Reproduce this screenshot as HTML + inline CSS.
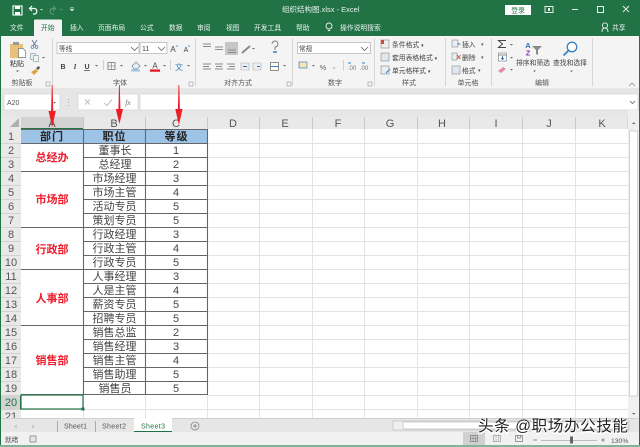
<!DOCTYPE html>
<html><head><meta charset="utf-8"><style>
html,body{margin:0;padding:0;width:640px;height:447px;overflow:hidden;background:#fff}
svg{display:block;filter:blur(.35px)}
text{font-family:"Liberation Sans","Noto Sans CJK SC",sans-serif}
.w{font-size:6.800px;fill:#e8f2ec}
.c{font-size:11px;fill:#444;text-anchor:middle}
.h{font-size:11px;fill:#222;text-anchor:middle;font-weight:bold}
.r{font-size:11px;fill:#f01c2c;text-anchor:middle;font-weight:bold}
.n{font-size:11px;fill:#555;text-anchor:middle}
.l{font-size:7px;fill:#555;text-anchor:middle}
</style></head><body>
<svg width="640" height="447" viewBox="0 0 640 447" xmlns="http://www.w3.org/2000/svg">
<rect width="640" height="447" fill="#fff"/>
<!-- title bar + tabs -->
<rect width="640" height="36" fill="#217346"/>
<rect x="13" y="6" width="9" height="9" fill="none" stroke="#fff" stroke-width="1.100"/><rect x="15" y="6" width="5" height="3" fill="#fff"/><rect x="15" y="12" width="5" height="3" fill="#fff"/>
<path d="M30 8.500h5a3 3 0 0 1 0 5.500h-2M32 6l-2.500 2.500 2.500 2.500" fill="none" stroke="#fff" stroke-width="1.200"/>
<path d="M40 9l1.500 1.500 1.500-1.500z" fill="#ddd"/>
<path d="M55 8.500h-3a3 3 0 0 0 0 5.500h2M53 6l2.500 2.500-2.500 2.500" fill="none" stroke="#5f9a7a" stroke-width="1.100"/>
<path d="M60 9l1.500 1.500 1.500-1.500z" fill="#5f9a7a"/>
<path d="M70 7.500h4M70 9l2 2 2-2z" fill="#cfe0d6" stroke="#cfe0d6" stroke-width=".6"/>
<text x="282" y="12" style="font-size:7.500px;fill:#e8f2ec">组织结构图.xlsx  -  Excel</text>
<rect x="505" y="5" width="26" height="10" fill="#fff"/>
<text x="518" y="12.500" style="font-size:6.800px;fill:#217346;text-anchor:middle">登录</text>
<rect x="545" y="6.500" width="8" height="6" fill="none" stroke="#e8f2ec"/><rect x="548" y="8" width="2" height="3" fill="#e8f2ec"/>
<path d="M572 9.500h6" stroke="#dfeee6"/>
<rect x="597.500" y="6.500" width="6" height="6" fill="none" stroke="#e8f2ec"/>
<path d="M623 6l6 6M629 6l-6 6" stroke="#e8f2ec" stroke-width=".9"/>
<path d="M34 36V20.500q0-1 1-1h26q1 0 1 1V36z" fill="#f3f3f3"/>
<text x="10" y="30" class="w">文件</text>
<text x="41" y="30" style="font-size:6.800px;fill:#217346">开始</text>
<text x="70" y="30" class="w">插入</text>
<text x="98" y="30" class="w">页面布局</text>
<text x="140" y="30" class="w">公式</text>
<text x="169" y="30" class="w">数据</text>
<text x="197" y="30" class="w">审阅</text>
<text x="226" y="30" class="w">视图</text>
<text x="254" y="30" class="w">开发工具</text>
<text x="296" y="30" class="w">帮助</text>
<circle cx="329" cy="26" r="3" fill="none" stroke="#e8f2ec" stroke-width=".9"/><path d="M327.800 30.500h2.400" stroke="#e8f2ec"/>
<text x="340" y="30" class="w">操作说明搜索</text>
<circle cx="605" cy="25.500" r="2.600" fill="none" stroke="#e8f2ec" stroke-width=".9"/><path d="M602 32q0-4 3-4t3 4" fill="none" stroke="#e8f2ec" stroke-width=".9"/>
<text x="612" y="30" class="w">共享</text>
<!-- ribbon -->
<rect y="36" width="640" height="52" fill="#f4f4f4"/>
<rect y="88" width="640" height="30" fill="#e6e6e6"/>
<path d="M52.500 38v48M195.500 38v48M292.500 38v48M374.500 38v48M445.500 38v48M491.500 38v48M592.500 38v48" stroke="#d6d6d6"/>
<!-- clipboard -->
<rect x="10" y="44" width="13" height="14" fill="#e8c07a"/><rect x="13" y="42" width="6" height="3" fill="#999"/>
<path d="M18.500 48.500h4.500l2.500 2.500v6.500h-7z" fill="#fff" stroke="#777" stroke-width=".7"/>
<text x="17" y="66" style="font-size:7px;fill:#333;text-anchor:middle">粘贴</text><path d="M16 70.500l1.500 1.500 1.500-1.500z" fill="#555"/>
<path d="M32 40l4 6M37 40l-4 6" stroke="#5a7a9a" stroke-width=".9"/><circle cx="32.500" cy="47" r="1.400" fill="none" stroke="#5a7a9a" stroke-width=".7"/><circle cx="36.500" cy="47" r="1.400" fill="none" stroke="#5a7a9a" stroke-width=".7"/>
<rect x="30.500" y="53.500" width="5" height="6" fill="#e8eef4" stroke="#8aa" stroke-width=".7"/><rect x="33.500" y="55.500" width="5" height="6" fill="#f4f4f4" stroke="#8aa" stroke-width=".7"/><path d="M42 57l1.500 1.500 1.500-1.500z" fill="#666"/>
<path d="M31 72l5-3 2 2-4 4z" fill="#d9a53a"/><path d="M36 68l3-2 1 2-2 2z" fill="#555"/>
<text x="22" y="85" class="l">剪贴板</text>
<rect x="46" y="82" width="4" height="4" fill="none" stroke="#999" stroke-width=".6"/>
<!-- font -->
<rect x="57" y="42.500" width="82" height="11" fill="#fff" stroke="#c6c6c6"/>
<rect x="140" y="42.500" width="27" height="11" fill="#fff" stroke="#c6c6c6"/>
<text x="59" y="51" style="font-size:6.600px;fill:#444">等线</text>
<text x="142" y="51" style="font-size:7px;fill:#444">11</text>
<path d="M131 47l3.500 3.500 3.500-3.500M158 47l3.500 3.500 3.500-3.500" fill="none" stroke="#666" stroke-width=".8"/>
<text x="173" y="52" style="font-size:8px;fill:#444;text-anchor:middle">A</text><text x="186" y="52" style="font-size:7px;fill:#444;text-anchor:middle">A</text>
<path d="M176 45.500l1 1 1-1M188 46.500l1-1 1 1" stroke="#3a80c0" fill="none" stroke-width=".6"/>
<text x="63" y="69" style="font-size:7px;fill:#444;text-anchor:middle;font-weight:bold">B</text>
<text x="75" y="69" style="font-size:7px;fill:#444;text-anchor:middle;font-style:italic;font-family:'Liberation Serif',serif;font-weight:bold">I</text>
<text x="87" y="69" style="font-size:7px;fill:#444;text-anchor:middle;font-weight:bold">U</text><path d="M84 70.500h6" stroke="#444" stroke-width=".7"/>
<path d="M95 65l1.500 1.500 1.500-1.500zM120 65l1.500 1.500 1.500-1.500zM144 65l1.500 1.500 1.500-1.500zM163 65l1.500 1.500 1.500-1.500zM187 65l1.500 1.500 1.500-1.500z" fill="#666"/>
<path d="M103.500 60v10M170.500 60v10" stroke="#d0d0d0"/>
<rect x="108" y="62.500" width="7" height="7" fill="none" stroke="#777" stroke-width=".8"/><path d="M111.500 62.500v7M108 66h7" stroke="#777" stroke-width=".6"/>
<path d="M132 66l4-4 4 4-3 3h-3z" fill="#e8eef4" stroke="#6a8aa0" stroke-width=".7"/><rect x="131" y="69.500" width="9" height="2" fill="#9dc3e6"/>
<text x="155" y="68.500" style="font-size:8px;fill:#444;text-anchor:middle">A</text><rect x="150" y="69.500" width="10" height="2.200" fill="#e01020"/>
<text x="179" y="70" style="font-size:8px;fill:#3a80c0;text-anchor:middle">文</text>
<text x="120" y="85" class="l">字体</text>
<rect x="189" y="82" width="4" height="4" fill="none" stroke="#999" stroke-width=".6"/>
<!-- alignment -->
<rect x="225" y="42" width="13" height="13" fill="#c6c6c6"/>
<path d="M203 44h8M203 46.500h8M215 47h8M215 49.500h8M228 50h8M228 52.500h8M203 64h8M203 66.500h6M203 69h8M215 64h8M216 66.500h6M215 69h8M227 64h8M229 66.500h6M227 69h8" stroke="#8a8a8a" stroke-width=".9"/>
<path d="M242 53l8-7" stroke="#8a8a8a" stroke-width="2"/><path d="M252 48l1.500 1.500 1.500-1.500z" fill="#666"/>
<path d="M241 63h8v7h-8zM253 63h8v7h-8z" fill="#eceff2" stroke="#aaa" stroke-width=".6"/>
<path d="M247 66.500h-4M257 66.500h3" stroke="#2a70b8" stroke-width="1.100"/>
<path d="M272 44a3 3 0 1 1 3 3v3" fill="none" stroke="#777" stroke-width=".9"/><path d="M273 52h4" stroke="#3a80c0" stroke-width="1.500"/>
<rect x="270.500" y="62.500" width="8" height="8" fill="#fff" stroke="#777" stroke-width=".8"/><path d="M270.500 66.500h8" stroke="#3a80c0"/>
<path d="M283 65l1.500 1.500 1.500-1.500z" fill="#666"/>
<text x="238" y="85" class="l">对齐方式</text>
<rect x="287" y="82" width="4" height="4" fill="none" stroke="#999" stroke-width=".6"/>
<!-- number -->
<rect x="297.500" y="42.500" width="73" height="11" fill="#fff" stroke="#c6c6c6"/>
<text x="299" y="51" style="font-size:6.600px;fill:#444">常规</text>
<path d="M361 47l3.500 3.500 3.500-3.500" fill="none" stroke="#666" stroke-width=".8"/>
<rect x="299" y="62" width="8" height="6" fill="#f6e7b0" stroke="#3a80c0" stroke-width=".7"/><path d="M312 65l1.500 1.500 1.500-1.500z" fill="#666"/>
<text x="323" y="70" style="font-size:7.500px;fill:#666;text-anchor:middle">%</text><text x="334" y="68" style="font-size:8px;fill:#555;text-anchor:middle">,</text>
<path d="M343.500 60v11" stroke="#d0d0d0"/>
<text x="352" y="70" style="font-size:6px;fill:#777;text-anchor:middle">.00</text><text x="364" y="70" style="font-size:6px;fill:#777;text-anchor:middle">.00</text>
<path d="M348 63h3M362 63h3" stroke="#3a80c0"/>
<text x="335" y="85" class="l">数字</text>
<rect x="368" y="82" width="4" height="4" fill="none" stroke="#999" stroke-width=".6"/>
<!-- styles -->
<rect x="381" y="40" width="8" height="8" fill="#eee" stroke="#888" stroke-width=".6"/><rect x="381" y="40" width="3" height="4" fill="#d04a30"/>
<rect x="381" y="53" width="8" height="8" fill="#dfe6ee" stroke="#888" stroke-width=".6"/>
<rect x="381" y="66" width="8" height="8" fill="#e8eef4" stroke="#888" stroke-width=".6"/><path d="M386 73l4-4" stroke="#3a80c0"/>
<text x="392" y="47" style="font-size:6.800px;fill:#444">条件格式 <tspan font-size="5">▾</tspan></text>
<text x="392" y="60" style="font-size:6.800px;fill:#444">套用表格格式 <tspan font-size="5">▾</tspan></text>
<text x="392" y="73" style="font-size:6.800px;fill:#444">单元格样式 <tspan font-size="5">▾</tspan></text>
<text x="409" y="85" class="l">样式</text>
<!-- cells -->
<rect x="452" y="40" width="6" height="7" fill="#e8eef4" stroke="#888" stroke-width=".6"/><path d="M457 44h3.500" stroke="#3a80c0"/>
<rect x="452" y="53" width="5" height="7" fill="#e8eef4" stroke="#888" stroke-width=".6"/><path d="M457 55l3.500 4M460.500 55l-3.500 4" stroke="#d04a30" stroke-width=".9"/>
<rect x="452" y="66" width="8" height="8" fill="#dfe8f2" stroke="#888" stroke-width=".6"/>
<text x="462" y="47" style="font-size:6.800px;fill:#444">插入</text><text x="481" y="46" style="font-size:5px;fill:#555">▾</text>
<text x="462" y="60" style="font-size:6.800px;fill:#444">删除</text><text x="481" y="59" style="font-size:5px;fill:#555">▾</text>
<text x="462" y="73" style="font-size:6.800px;fill:#444">格式</text><text x="478" y="72" style="font-size:5px;fill:#555">▾</text>
<text x="468" y="85" class="l">单元格</text>
<!-- editing -->
<path d="M506 40.500h-7.500l4 3.500-4 3.500h7.500" fill="none" stroke="#444" stroke-width="1"/>
<path d="M510 44l1.500 1.500 1.500-1.500zM510 57l1.500 1.500 1.500-1.500zM510 69l1.500 1.500 1.500-1.500z" fill="#666"/>
<rect x="498.500" y="53" width="8" height="8" fill="#fff" stroke="#888" stroke-width=".7"/><path d="M498.500 55h8" stroke="#888"/><path d="M502.500 56v3M501 58l1.500 1.500 1.500-1.500" stroke="#2a70b8" fill="none" stroke-width=".9"/>
<path d="M498 71l5-4 3 2-5 4z" fill="#e88aa0"/>
<text x="528" y="48" style="font-size:7.500px;fill:#2a70b8;text-anchor:middle;font-weight:bold">A</text>
<text x="528" y="55.500" style="font-size:7.500px;fill:#8a3ab0;text-anchor:middle;font-weight:bold">Z</text>
<path d="M532 46h10l-4 4v5l-2-1v-4z" fill="#8a8a8a"/>
<circle cx="572" cy="47" r="4.800" fill="#fff" stroke="#3a80c0" stroke-width="1.300"/><path d="M568.500 50.500l-5 5" stroke="#3a80c0" stroke-width="1.800"/>
<text x="533" y="65" style="font-size:6.800px;fill:#444;text-anchor:middle">排序和筛选</text>
<text x="570" y="65" style="font-size:6.800px;fill:#444;text-anchor:middle">查找和选择</text>
<path d="M533 70.500l1.500 1.500 1.500-1.500zM570 70.500l1.500 1.500 1.500-1.500z" fill="#666"/>
<text x="542" y="85" class="l">编辑</text>
<path d="M629 86l3-3 3 3" fill="none" stroke="#888" stroke-width=".7"/>
<!-- formula bar -->
<rect x="4" y="94" width="56" height="16" fill="#fff" stroke="#dcdcdc"/>
<text x="7" y="105" style="font-size:7px;fill:#555">A20</text>
<path d="M53 102l1.500 1.500 1.500-1.500z" fill="#666"/>
<path d="M68.500 99v1M68.500 102v1M68.500 105v1" stroke="#aaa"/>
<rect x="78" y="94" width="60" height="16" fill="#fff" stroke="#dcdcdc"/>
<path d="M85 99.500l5 5M90 99.500l-5 5" stroke="#c0c0c0"/>
<path d="M104 103l3 2.500 5-6" fill="none" stroke="#c0c0c0"/>
<text x="128" y="105" style="font-size:7.500px;fill:#666;text-anchor:middle;font-style:italic;font-family:'Liberation Serif',serif">fx</text>
<rect x="140" y="94" width="498" height="16" fill="#fff" stroke="#dcdcdc"/>
<path d="M630 101l2.500 2.500 2.500-2.500" fill="none" stroke="#666" stroke-width=".8"/>
<!-- col header -->
<rect x="1" y="117" width="627" height="12" fill="#e9e9e9"/>
<rect x="21" y="117" width="62" height="12" fill="#d2d2d2"/>
<rect x="21" y="128" width="62" height="1.200" fill="#217346"/>
<path d="M10 127h9v-9z" fill="#b0b0b0"/>
<path d="M83.500 117v12M145.500 117v12M207.500 117v12M259.500 117v12M312.500 117v12M364.500 117v12M417.500 117v12M469.500 117v12M522.500 117v12M575.500 117v12M628 117v12" stroke="#c8c8c8"/>
<text x="52" y="127" class="n">A</text><text x="114" y="127" class="n">B</text><text x="176" y="127" class="n">C</text><text x="233" y="127" class="n">D</text><text x="285" y="127" class="n">E</text><text x="338" y="127" class="n">F</text><text x="390" y="127" class="n">G</text><text x="442" y="127" class="n">H</text><text x="496" y="127" class="n">I</text><text x="549" y="127" class="n">J</text><text x="602" y="127" class="n">K</text>
<!-- row header -->
<rect x="1" y="129" width="20" height="290" fill="#e9e9e9"/>
<rect x="1" y="395" width="20" height="14" fill="#d2d2d2"/>
<rect x="20" y="395" width="1" height="14" fill="#217346"/>
<path d="M1 143.500h20M1 157.500h20M1 171.500h20M1 185.500h20M1 199.500h20M1 213.500h20M1 227.500h20M1 241.500h20M1 255.500h20M1 269.500h20M1 283.500h20M1 297.500h20M1 311.500h20M1 325.500h20M1 339.500h20M1 353.500h20M1 367.500h20M1 381.500h20M1 395.500h20M1 409.500h20" stroke="#d2d2d2"/>
<g>
<text x="11" y="140" class="n">1</text><text x="11" y="154" class="n">2</text><text x="11" y="168" class="n">3</text><text x="11" y="182" class="n">4</text><text x="11" y="196" class="n">5</text><text x="11" y="210" class="n">6</text><text x="11" y="224" class="n">7</text><text x="11" y="238" class="n">8</text><text x="11" y="252" class="n">9</text><text x="11" y="266" class="n">10</text><text x="11" y="280" class="n">11</text><text x="11" y="294" class="n">12</text><text x="11" y="308" class="n">13</text><text x="11" y="322" class="n">14</text><text x="11" y="336" class="n">15</text><text x="11" y="350" class="n">16</text><text x="11" y="364" class="n">17</text><text x="11" y="378" class="n">18</text><text x="11" y="392" class="n">19</text><text x="11" y="406" style="font-size:11px;fill:#217346;text-anchor:middle">20</text><text x="11" y="420" class="n">21</text>
</g>
<!-- gridlines -->
<path d="M208 143.500H628M208 157.500H628M208 171.500H628M208 185.500H628M208 199.500H628M208 213.500H628M208 227.500H628M208 241.500H628M208 255.500H628M208 269.500H628M208 283.500H628M208 297.500H628M208 311.500H628M208 325.500H628M208 339.500H628M208 353.500H628M208 367.500H628M208 381.500H628M208 395.500H628M208 409.500H628M21 409.500H208" stroke="#e4e4e4"/>
<path d="M259.500 129V419M312.500 129V419M364.500 129V419M417.500 129V419M469.500 129V419M522.500 129V419M575.500 129V419M83.500 395V419M145.500 395V419M207.500 395V419" stroke="#e4e4e4"/>
<!-- table -->
<rect x="21" y="129" width="186" height="14" fill="#9dc3e6"/>
<path d="M21 129.500H207.500M21 143.500H207.500M21 171.500H207.500M21 227.500H207.500M21 269.500H207.500M21 325.500H207.500M21 394.500H207.500" stroke="#666" stroke-width="1.100"/>
<path d="M84 157.500H207.500M84 185.500H207.500M84 199.500H207.500M84 213.500H207.500M84 241.500H207.500M84 255.500H207.500M84 283.500H207.500M84 297.500H207.500M84 311.500H207.500M84 339.500H207.500M84 353.500H207.500M84 367.500H207.500M84 381.500H207.500" stroke="#666" stroke-width="1.100"/>
<path d="M83.500 129V395M145.500 129V395M207.500 129V395" stroke="#666" stroke-width="1.100"/>
<text x="52" y="140" class="h" letter-spacing="1">部门</text><text x="114.500" y="140" class="h" letter-spacing="1">职位</text><text x="176.500" y="140" class="h" letter-spacing="1">等级</text>
<text x="52" y="161" class="r">总经办</text><text x="52" y="203" class="r">市场部</text><text x="52" y="253" class="r">行政部</text><text x="52" y="302" class="r">人事部</text><text x="52" y="364" class="r">销售部</text>
<g>
<text x="115" y="154" class="c">董事长</text><text x="176" y="154" class="c">1</text>
<text x="115" y="168" class="c">总经理</text><text x="176" y="168" class="c">2</text>
<text x="114.500" y="182" class="c">市场经理</text><text x="176" y="182" class="c">3</text>
<text x="114.500" y="196" class="c">市场主管</text><text x="176" y="196" class="c">4</text>
<text x="114.500" y="210" class="c">活动专员</text><text x="176" y="210" class="c">5</text>
<text x="114.500" y="224" class="c">策划专员</text><text x="176" y="224" class="c">5</text>
<text x="114.500" y="238" class="c">行政经理</text><text x="176" y="238" class="c">3</text>
<text x="114.500" y="252" class="c">行政主管</text><text x="176" y="252" class="c">4</text>
<text x="114.500" y="266" class="c">行政专员</text><text x="176" y="266" class="c">5</text>
<text x="114.500" y="280" class="c">人事经理</text><text x="176" y="280" class="c">3</text>
<text x="114.500" y="294" class="c">人是主管</text><text x="176" y="294" class="c">4</text>
<text x="114.500" y="308" class="c">薪资专员</text><text x="176" y="308" class="c">5</text>
<text x="114.500" y="322" class="c">招聘专员</text><text x="176" y="322" class="c">5</text>
<text x="114.500" y="336" class="c">销售总监</text><text x="176" y="336" class="c">2</text>
<text x="114.500" y="350" class="c">销售经理</text><text x="176" y="350" class="c">3</text>
<text x="114.500" y="364" class="c">销售主管</text><text x="176" y="364" class="c">4</text>
<text x="114.500" y="378" class="c">销售助理</text><text x="176" y="378" class="c">5</text>
<text x="115" y="392" class="c">销售员</text><text x="176" y="392" class="c">5</text>
</g>
<!-- selection -->
<rect x="21" y="395" width="62" height="14" fill="#fff" stroke="#217346" stroke-width="1.200"/>
<rect x="81.500" y="407.500" width="3" height="3" fill="#217346"/>
<!-- arrows -->
<path d="M51.800 85h.8L53.200 111 55.800 111 52.200 127 48.500 111 51.100 111z" fill="#ee1c25"/>
<path d="M119 85h.8L120.400 109 123 109 119.400 124 115.800 109 118.400 109z" fill="#ee1c25"/>
<path d="M178.500 85h.8L179.900 109 182.500 109 178.900 125 175.300 109 177.900 109z" fill="#ee1c25"/>
<!-- scrollbar -->
<rect x="628" y="110" width="12" height="309" fill="#f0f0f0"/>
<rect x="629.500" y="131" width="8" height="265" fill="#fff" stroke="#c8c8c8" stroke-width=".8"/>
<path d="M632 413l1.800 1.800 1.800-1.800z" fill="#666"/>
<path d="M632 124l1.800-1.800 1.800 1.800z" fill="#666"/>
<!-- tabs -->
<rect x="1" y="418" width="639" height="14" fill="#e6e6e6"/>
<path d="M0 418.500h640" stroke="#d0d0d0"/>
<path d="M17 425l-2 1.500 2 1.500M32 425l2 1.500-2 1.500" fill="none" stroke="#b8b8b8" stroke-width=".8"/>
<path d="M57.500 421v11M95.500 421v11" stroke="#aaa"/>
<rect x="134" y="418" width="38" height="14" fill="#fff"/>
<rect x="134" y="431" width="38" height="1.500" fill="#217346"/>
<text x="64" y="428.500" textLength="23" style="font-size:7px;fill:#555">Sheet1</text>
<text x="102" y="428.500" textLength="24" style="font-size:7px;fill:#555">Sheet2</text>
<text x="141" y="428.500" textLength="24" style="font-size:7px;fill:#217346">Sheet3</text>
<circle cx="195" cy="426" r="4" fill="none" stroke="#888" stroke-width=".8"/><path d="M193 426h4M195 424v4" stroke="#777" stroke-width=".8"/>
<rect x="393" y="421" width="236" height="9" fill="#f0f0f0" stroke="#c0c0c0" stroke-width=".7"/>
<rect x="403" y="422" width="225" height="7" fill="#fff" stroke="#bbb" stroke-width=".7"/>
<!-- status -->
<rect x="1" y="432" width="639" height="13" fill="#f1f1f1"/>
<text x="5" y="442" style="font-size:6.600px;fill:#555">就绪</text>
<rect x="30" y="436" width="6" height="6" fill="#e8e8e8" stroke="#777" stroke-width=".7"/>
<rect x="463" y="432" width="22" height="13" fill="#d0d0d0"/>
<rect x="470.500" y="435.500" width="7" height="6" fill="none" stroke="#777" stroke-width=".7"/><path d="M473 435.500v6M475.500 435.500v6M470.500 438.500h7" stroke="#777" stroke-width=".5"/>
<rect x="493.500" y="435.500" width="7" height="6" fill="none" stroke="#999" stroke-width=".7"/><path d="M496 435.500v6M498.500 435.500v6" stroke="#999" stroke-width=".5"/>
<path d="M515.500 435.500h7v6h-7zM517.500 435.500v2.500h3v-2.500" fill="none" stroke="#777" stroke-width=".7"/>
<path d="M533 440h4M601 440h4M603 438v4" stroke="#777" stroke-width=".7"/>
<path d="M541 440.500h56" stroke="#aaa" stroke-width=".8"/>
<rect x="570" y="436.500" width="3" height="7" fill="#666"/>
<text x="611" y="443" style="font-size:6.800px;fill:#555">130%</text>
<!-- frame -->
<rect x=".5" y=".5" width="639" height="446" fill="none" stroke="#217346" stroke-width="1"/>
<rect y="445" width="640" height="2" fill="#7fb39a"/>
<!-- watermark -->
<text x="478" y="432" textLength="150" style="font-size:15.500px;fill:#fff;stroke:#fff;stroke-width:1.600px;paint-order:stroke">头条 @职场办公技能</text>
<text x="478" y="431" textLength="150" style="font-size:15.500px;fill:#222">头条 @职场办公技能</text>
</svg>
</body></html>
